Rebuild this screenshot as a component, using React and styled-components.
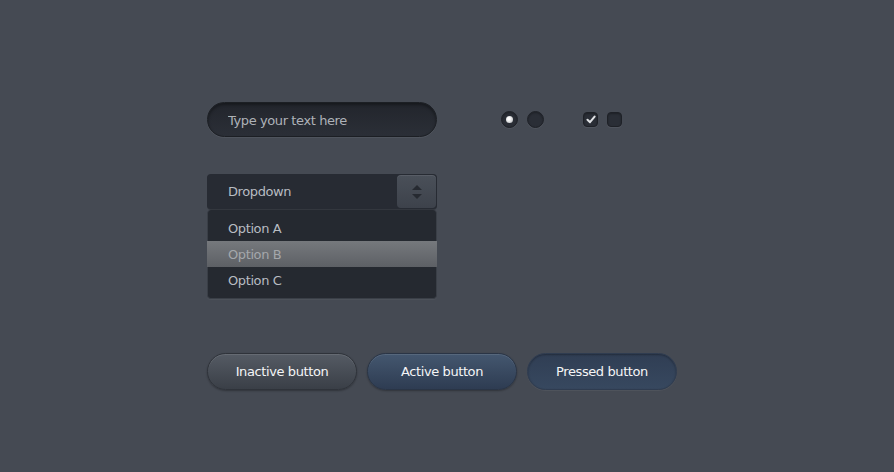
import React from "react";
import styled, { createGlobalStyle } from "styled-components";

const Global = createGlobalStyle`
  html, body { margin: 0; padding: 0; background: #454a53; }
  body { font-family: "DejaVu Sans", Verdana, sans-serif; }
`;

const Page = styled.div`
  width: 894px;
  height: 472px;
  box-sizing: border-box;
  padding: 102px 0 0 207px;
  background: #454a53;
  display: flex;
  flex-direction: column;
  letter-spacing: -0.4px;
`;

const TopRow = styled.div`
  display: flex;
  align-items: center;
`;

const TextInput = styled.input`
  width: 230px;
  height: 35px;
  box-sizing: border-box;
  border-radius: 18px;
  border: 1px solid #1c1f24;
  background: linear-gradient(#22252c, #2b2f37);
  box-shadow: inset 0 2px 3px rgba(0,0,0,0.35), 0 1px 0 rgba(255,255,255,0.06);
  padding: 2px 0 0 20px;
  font-family: "DejaVu Sans", Verdana, sans-serif;
  font-size: 13px;
  letter-spacing: -0.4px;
  color: #b8bcc2;
  outline: none;
  &::placeholder { color: #aeb2b8; }
`;

const Group = styled.div`
  display: flex;
  align-items: center;
  gap: ${(p) => p.$gap}px;
  margin-left: ${(p) => p.$ml}px;
`;

const Radio = styled.span`
  width: 17px;
  height: 17px;
  border-radius: 50%;
  box-sizing: border-box;
  background: #2a2e36;
  border: 1px solid #1e2127;
  box-shadow: inset 0 1px 2px rgba(0,0,0,0.3), 0 1px 0 rgba(255,255,255,0.06);
  display: flex;
  align-items: center;
  justify-content: center;
`;

const Dot = styled.span`
  width: 7px;
  height: 7px;
  border-radius: 50%;
  background: radial-gradient(circle at 40% 40%, #ffffff 20%, #a9acb0 100%);
`;

const Check = styled.span`
  width: 15px;
  height: 15px;
  border-radius: 4px;
  box-sizing: border-box;
  background: #2a2e36;
  border: 1px solid #1e2127;
  box-shadow: inset 0 1px 2px rgba(0,0,0,0.3), 0 1px 0 rgba(255,255,255,0.06);
  display: flex;
  align-items: center;
  justify-content: center;
`;

const DropWrap = styled.div`
  margin-top: 37px;
  width: 230px;
  display: flex;
  flex-direction: column;
`;

const DropHead = styled.div`
  height: 35px;
  box-sizing: border-box;
  border-radius: 4px;
  background: #272b33;
  box-shadow: 0 1px 0 rgba(0,0,0,0.25);
  display: flex;
  align-items: center;
  justify-content: space-between;
  padding: 1px 1px 1px 21px;
  font-size: 13px;
  color: #b8bcc2;
`;

const Spinner = styled.div`
  width: 39px;
  height: 33px;
  border-radius: 4px;
  background: linear-gradient(#4a5059, #3d424b);
  box-shadow: inset 0 1px 0 rgba(255,255,255,0.08);
  display: flex;
  flex-direction: column;
  align-items: center;
  justify-content: center;
  gap: 4px;
`;

const Menu = styled.div`
  margin-top: 1px;
  border-radius: 4px;
  background: #252930;
  border: 1px solid #3a3f47;
  border-top: none;
  box-sizing: border-box;
  padding: 5px 0 5px;
  height: 89px;
  box-shadow: 0 1px 0 rgba(255,255,255,0.04);
`;

const Option = styled.div`
  height: 26px;
  display: flex;
  align-items: center;
  padding-left: 21px;
  margin: 0 -1px;
  font-size: 13px;
  color: ${(p) => (p.$active ? "#a4a7ab" : "#b8bcc2")};
  background: ${(p) => (p.$active ? "linear-gradient(#76797d, #5d6065)" : "transparent")};
`;

const ButtonRow = styled.div`
  margin-top: 54px;
  display: flex;
  gap: 10px;
`;

const variants = {
  inactive: {
    bg: "linear-gradient(#555b64, #3a3f47)",
    border: "#2f333a",
    shadow: "inset 0 1px 0 rgba(255,255,255,0.1), 0 1px 2px rgba(0,0,0,0.3)",
  },
  active: {
    bg: "linear-gradient(#44576f, #2e3c52)",
    border: "#2a3546",
    shadow: "inset 0 1px 0 rgba(255,255,255,0.1), 0 1px 2px rgba(0,0,0,0.3)",
  },
  pressed: {
    bg: "linear-gradient(#303e54, #37485f)",
    border: "#2f3c50",
    shadow: "inset 0 1px 2px rgba(0,0,0,0.3), 0 1px 0 rgba(255,255,255,0.05)",
  },
};

const Button = styled.button`
  width: 150px;
  height: 37px;
  border-radius: 19px;
  border: 1px solid ${(p) => variants[p.$v].border};
  background: ${(p) => variants[p.$v].bg};
  box-shadow: ${(p) => variants[p.$v].shadow};
  color: #f4f5f6;
  font-family: "DejaVu Sans", Verdana, sans-serif;
  font-size: 13px;
  letter-spacing: -0.4px;
  padding: 0;
  cursor: pointer;
`;

export default function App() {
  return (
    <>
      <Global />
      <Page>
        <TopRow>
          <TextInput placeholder="Type your text here" />
          <Group $ml={64} $gap={9}>
            <Radio><Dot /></Radio>
            <Radio />
          </Group>
          <Group $ml={39} $gap={9}>
            <Check>
              <svg width="10" height="9" viewBox="0 0 10 9">
                <path d="M1.5 4.8 L4 7.2 L8.6 1.6" fill="none" stroke="#dfe1e4" strokeWidth="2" strokeLinecap="round" strokeLinejoin="round" />
              </svg>
            </Check>
            <Check />
          </Group>
        </TopRow>
        <DropWrap>
          <DropHead>
            <span>Dropdown</span>
            <Spinner>
              <svg width="10" height="5" viewBox="0 0 10 5"><path d="M0 5 L5 0 L10 5 Z" fill="#262a31" /></svg>
              <svg width="10" height="5" viewBox="0 0 10 5"><path d="M0 0 L5 5 L10 0 Z" fill="#262a31" /></svg>
            </Spinner>
          </DropHead>
          <Menu>
            <Option>Option A</Option>
            <Option $active>Option B</Option>
            <Option>Option C</Option>
          </Menu>
        </DropWrap>
        <ButtonRow>
          <Button $v="inactive">Inactive button</Button>
          <Button $v="active">Active button</Button>
          <Button $v="pressed">Pressed button</Button>
        </ButtonRow>
      </Page>
    </>
  );
}
